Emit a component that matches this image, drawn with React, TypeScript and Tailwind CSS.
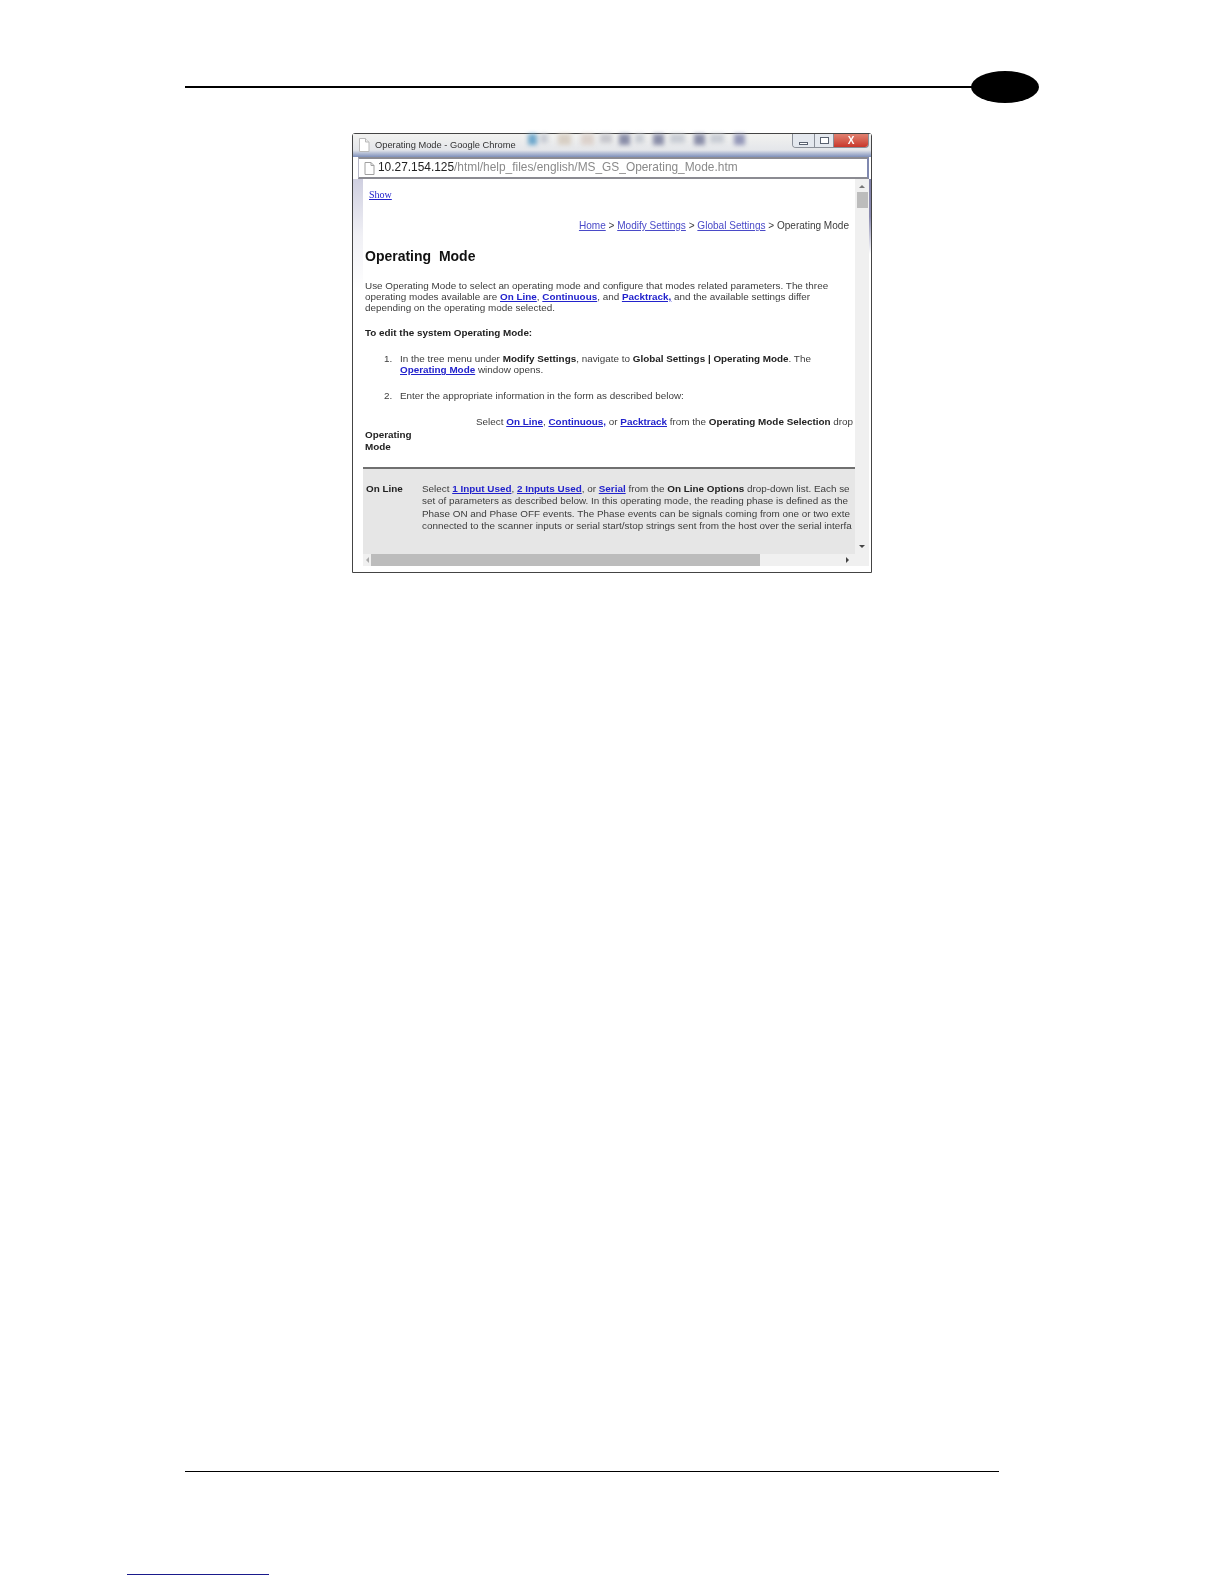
const link = "text-[#2222cc] font-bold underline";
const crumb = "text-[#4a4ac8] underline";

function TitleBar() {
  return (
    <div className="h-[23px] shrink-0 flex items-start bg-gradient-to-b from-[#f2f2f0] via-[#e4e6ea] via-70% to-[#7f90ba] pl-[5px]">
      <svg width="12" height="14" viewBox="0 0 12 14" className="mt-[4px]">
        <path d="M1.5 .5h6l3.5 3.5v9.5h-9.500z" fill="#fff" stroke="#b9b9b9" />
        <path d="M7.5 .5v3.5h3.500" fill="#eee" stroke="#b9b9b9" />
      </svg>
      <span className="ml-[5px] mt-[4px] text-[9.3px] leading-[14px] text-[#333] whitespace-nowrap blur-[0.3px]">Operating Mode - Google Chrome</span>
      <div className="flex-1 flex pl-[12px] blur-[2px]">
        <div className="w-[9px] h-[11px] bg-[#6fa8cc]" />
        <div className="w-[8px] h-[9px] ml-[3px] bg-[#c8ccd4]" />
        <div className="w-[13px] h-[11px] ml-[10px] bg-[#d8cfc4]" />
        <div className="w-[13px] h-[11px] ml-[10px] bg-[#dcd2cc]" />
        <div className="w-[12px] h-[9px] ml-[6px] bg-[#c6c6cc]" />
        <div className="w-[11px] h-[11px] ml-[7px] bg-[#8a8ea8]" />
        <div className="w-[9px] h-[9px] ml-[5px] bg-[#c8ccd4]" />
        <div className="w-[11px] h-[11px] ml-[9px] bg-[#8a8ea8]" />
        <div className="w-[15px] h-[9px] ml-[6px] bg-[#c8ccd4]" />
        <div className="w-[11px] h-[11px] ml-[9px] bg-[#8a8ea8]" />
        <div className="w-[14px] h-[9px] ml-[5px] bg-[#c8ccd4]" />
        <div className="w-[11px] h-[11px] ml-[10px] bg-[#9498b8]" />
      </div>
      <div className="flex h-[14px] w-[77px] mr-[2px] rounded-b-[4px] border border-t-0 border-[#8a8f98] overflow-hidden blur-[0.3px]">
        <div className="w-[22px] border-r border-[#8a8f98] bg-[#e4e8ee] flex items-end justify-center pb-[2px]">
          <div className="w-[9px] h-[3px] bg-[#fff] border border-[#5a6270]" />
        </div>
        <div className="w-[19px] border-r border-[#8a8f98] bg-[#e4e8ee] flex items-center justify-center">
          <div className="w-[9px] h-[7px] bg-[#fff] border border-[#5a6270]" />
        </div>
        <div className="flex-1 bg-gradient-to-b from-[#e08070] to-[#c8352a] flex items-center justify-center text-white text-[10px] font-bold leading-none">
          X
        </div>
      </div>
    </div>
  );
}

function AddressBar() {
  return (
    <div className="h-[22px] shrink-0 ml-[5px] mr-[2px] bg-white border-y-2 border-y-[#8b8b92] border-r-2 border-r-[#7f88b0] border-l border-l-[#b9b9c8] flex items-center pl-[5px]">
      <svg width="11" height="13" viewBox="0 0 11 13">
        <path d="M1 .5h6l3 3v9h-9z" fill="#fff" stroke="#a0a0a0" />
        <path d="M7 .5v3h3" fill="none" stroke="#a0a0a0" />
      </svg>
      <span className="ml-[3px] text-[11.9px] leading-none text-[#222] whitespace-nowrap blur-[0.3px]">
        10.27.154.125<span className="text-[#8a8a8a]">/html/help_files/english/MS_GS_Operating_Mode.htm</span>
      </span>
    </div>
  );
}

function VScroll() {
  return (
    <div className="w-[14px] shrink-0 bg-[#f0f0f0] flex flex-col items-center pt-[6px]">
      <div className="w-0 h-0 border-x-[3px] border-x-transparent border-b-[3px] border-b-[#777]" />
      <div className="w-[11px] h-[16px] bg-[#bcbcbc] mt-[4px]" />
      <div className="flex-1" />
      <div className="w-0 h-0 border-x-[3px] border-x-transparent border-t-[3px] border-t-[#444] mb-[6px]" />
    </div>
  );
}

function HScroll() {
  return (
    <div className="h-[12px] ml-[10px] mr-[2px] shrink-0 bg-[#f0f0f0] flex items-center">
      <div className="w-[8px] flex justify-center">
        <div className="w-0 h-0 border-y-[3px] border-y-transparent border-r-[3px] border-r-[#aaa]" />
      </div>
      <div className="w-[389px] h-[12px] bg-[#bcbcbc]" />
      <div className="flex-1 flex justify-end pr-[20px]">
        <div className="w-0 h-0 border-y-[3px] border-y-transparent border-l-[3px] border-l-[#444]" />
      </div>
    </div>
  );
}

function HelpPage() {
  return (
    <div className="flex-1 min-w-0 flex flex-col overflow-hidden bg-white text-[9.88px] leading-[11px] text-[#3c3c3c] whitespace-nowrap blur-[0.4px]">
      <div className="h-[288px] shrink-0 pl-[2px]">
        <p className="pt-[10px] pl-[4px] font-['Liberation_Serif',serif] text-[10px] leading-[12px] text-[#2222cc] underline">Show</p>
        <p className="mt-[19px] text-right pr-[6px] text-[10.05px] leading-[12px]">
          <span className={crumb}>Home</span> &gt; <span className={crumb}>Modify Settings</span> &gt;{" "}
          <span className={crumb}>Global Settings</span> &gt; Operating Mode
        </p>
        <h1 className="mt-[14px] text-[14px] leading-[20px] font-bold text-[#111]">Operating&nbsp; Mode</h1>
        <div className="mt-[14px]">
          <p>Use Operating Mode to select an operating mode and configure that modes related parameters. The three</p>
          <p>
            operating modes available are <span className={link}>On Line</span>, <span className={link}>Continuous</span>, and{" "}
            <span className={link}>Packtrack,</span> and the available settings differ
          </p>
          <p>depending on the operating mode selected.</p>
        </div>
        <p className="mt-[14px] font-bold text-[#222]">To edit the system Operating Mode:</p>
        <div className="mt-[15px] flex">
          <span className="w-[35px] pl-[19px] shrink-0">1.</span>
          <div>
            <p>
              In the tree menu under <b className="text-[#222]">Modify Settings</b>, navigate to <b className="text-[#222]">Global Settings | Operating Mode</b>. The
            </p>
            <p>
              <span className={link}>Operating Mode</span> window opens.
            </p>
          </div>
        </div>
        <div className="mt-[15px] flex">
          <span className="w-[35px] pl-[19px] shrink-0">2.</span>
          <p>Enter the appropriate information in the form as described below:</p>
        </div>
        <p className="mt-[15px] pl-[111px]">
          Select <span className={link}>On Line</span>, <span className={link}>Continuous,</span> or <span className={link}>Packtrack</span> from the{" "}
          <b className="text-[#222]">Operating Mode Selection</b> drop
        </p>
        <p className="mt-[2px] font-bold text-[#222] leading-[12px]">
          Operating
          <br />
          Mode
        </p>
      </div>
      <div className="flex-1 border-t-2 border-[#707070] bg-[#e6e6e6] flex pt-[14px] pl-[3px]">
        <b className="w-[56px] shrink-0 leading-[12px] text-[#222]">On Line</b>
        <div className="leading-[12.4px]">
          <p>
            Select <span className={link}>1 Input Used</span>, <span className={link}>2 Inputs Used</span>, or <span className={link}>Serial</span> from the{" "}
            <b className="text-[#222]">On Line Options</b> drop-down list. Each se
          </p>
          <p>set of parameters as described below. In this operating mode, the reading phase is defined as the</p>
          <p>Phase ON and Phase OFF events. The Phase events can be signals coming from one or two exte</p>
          <p>connected to the scanner inputs or serial start/stop strings sent from the host over the serial interfa</p>
        </div>
      </div>
    </div>
  );
}

export default function App() {
  return (
    <div className="relative h-[1584px] bg-white font-['Liberation_Sans',Arial,sans-serif]">
      <div className="pt-[71px] pl-[185px] pr-[185px] flex items-center">
        <div className="flex-1 h-[2px] bg-black" />
        <div className="w-[68px] h-[32px] -ml-[2px] rounded-[50%] bg-black" />
      </div>

      <div className="mt-[30px] ml-[352px] w-[520px] h-[440px] flex flex-col border border-[#444] rounded-t-[3px] bg-white pb-[6px]">
        <TitleBar />
        <AddressBar />
        <div className="flex flex-1 min-h-0">
          <div className="w-[10px] shrink-0 bg-gradient-to-b from-[#cfcfe0] via-[#f0f0f5] via-15% to-white to-30%" />
          <HelpPage />
          <VScroll />
          <div className="w-[2px] shrink-0 bg-gradient-to-b from-[#7f80a8] via-[#8a8ab0] via-10% to-white to-20%" />
        </div>
        <HScroll />
      </div>

      <div className="mt-[898px] ml-[185px] w-[814px] h-[1px] bg-black" />
      <div className="mt-[102px] ml-[127px] w-[142px] h-[1px] bg-[#1a1a8c]" />
    </div>
  );
}
